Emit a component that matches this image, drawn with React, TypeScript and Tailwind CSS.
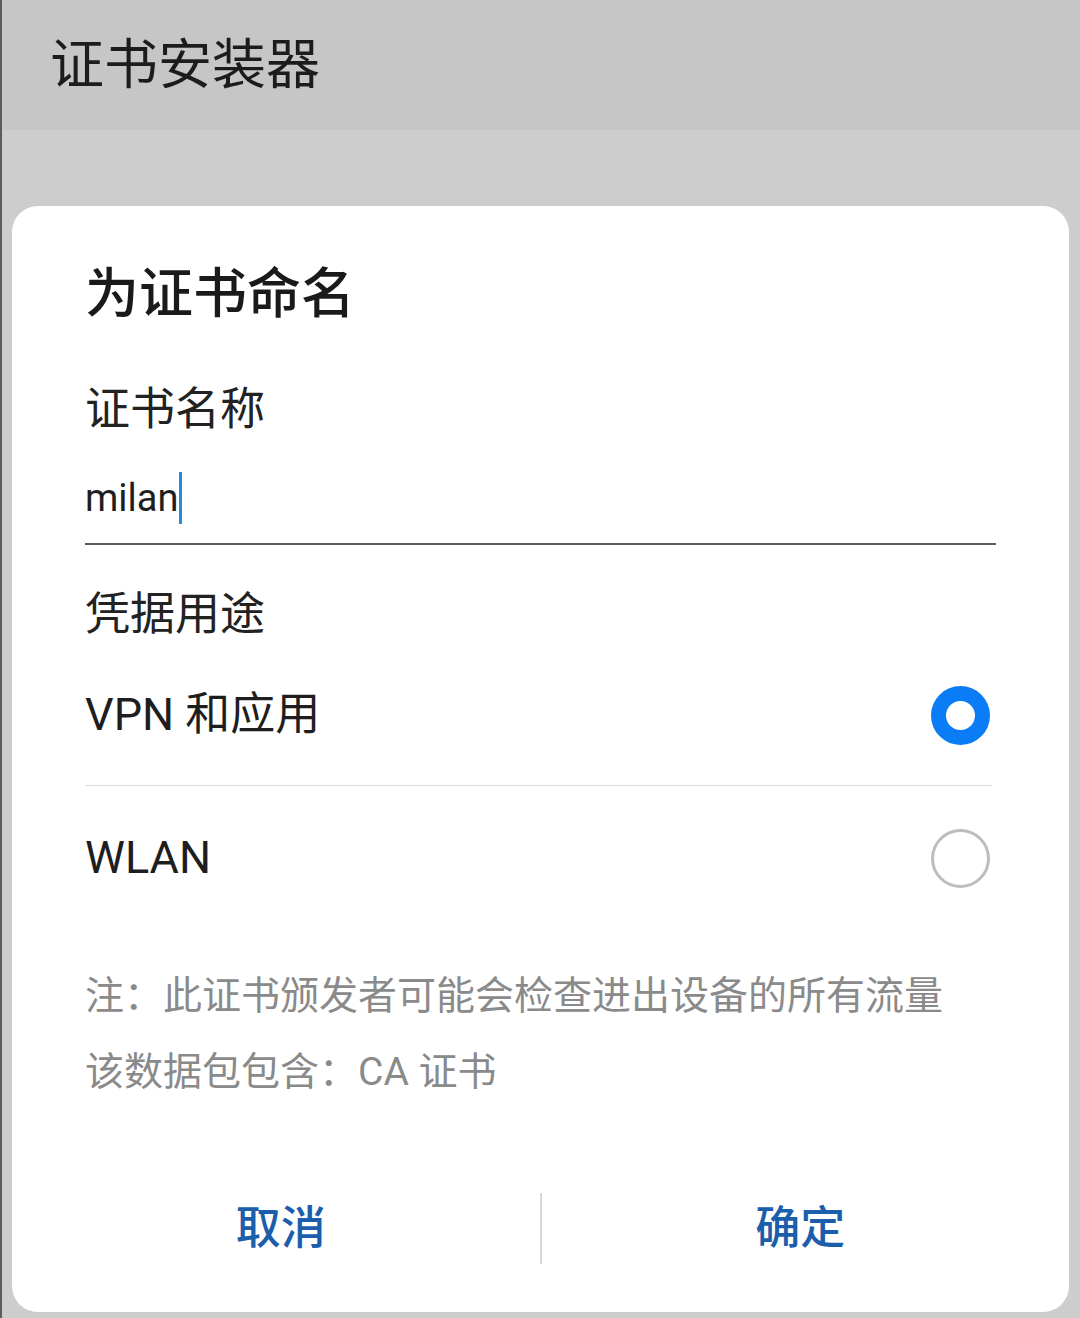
import React from "react";

const font = "font-['Roboto','Noto_Sans_CJK_SC',sans-serif]";

function Radio({ checked }: { checked: boolean }) {
  return checked ? (
    <span className="w-[59px] h-[59px] rounded-full border-[15px] border-[#0a7cf6] bg-white" />
  ) : (
    <span className="w-[59px] h-[59px] rounded-full border-[3px] border-[#bdbdbd] bg-white" />
  );
}

export default function App() {
  return (
    <div className={`${font} min-h-[1318px] w-[1080px] bg-[#cdcdcd] border-l-2 border-[#5c5c5c] flex flex-col`}>
      <div className="h-[130px] bg-[#c6c6c6] flex items-center pl-[48px] pt-[2px]">
        <h1 className="text-[54px] leading-none text-[#1c1c1c]">证书安装器</h1>
      </div>
      <div className="h-[76px]" />

      <div className="ml-[10px] mr-[11px] h-[1106px] bg-white rounded-[26px] flex flex-col">
        <div className="px-[73px] flex flex-col">
          <h2 className="mt-[52px] h-[72px] flex items-center text-[54px] font-medium text-[#1a1a1a]">为证书命名</h2>

          <div className="mt-[50px] h-[60px] flex items-center text-[45px] text-[#222]">证书名称</div>

          <div className="h-[105px] pt-[12px] flex items-center border-b-2 border-[#5a5a5a]">
            <span className="text-[38px] leading-none text-[#1e1e1e]">milan</span>
            <span className="ml-[1px] w-[3px] h-[52px] bg-[#2a8ad8]" />
          </div>

          <div className="mt-[40px] h-[60px] flex items-center text-[45px] text-[#222]">凭据用途</div>

          <div className="h-[140px] flex items-center justify-between pr-[6px]">
            <span className="text-[45px] text-[#1e1e1e]">VPN 和应用</span>
            <Radio checked />
          </div>
          <div className="h-px bg-[#dcdcdc] mr-[4px]" />
          <div className="h-[144px] flex items-center justify-between pr-[6px]">
            <span className="text-[45px] text-[#1e1e1e]">WLAN</span>
            <Radio checked={false} />
          </div>

          <div className="mt-[28px] text-[39px] leading-[76px] text-[#8a8a8a] whitespace-nowrap">
            <p>注：此证书颁发者可能会检查进出设备的所有流量</p>
            <p>该数据包包含：CA 证书</p>
          </div>
        </div>

        <div className="mt-[83px] mx-[10px] h-[71px] flex items-center">
          <button className="flex-1 text-[45px] font-medium text-[#1b5eab]">取消</button>
          <span className="w-[2px] h-[71px] bg-[#d6d6d6]" />
          <button className="flex-1 text-[45px] font-medium text-[#1b5eab]">确定</button>
        </div>
      </div>
    </div>
  );
}
